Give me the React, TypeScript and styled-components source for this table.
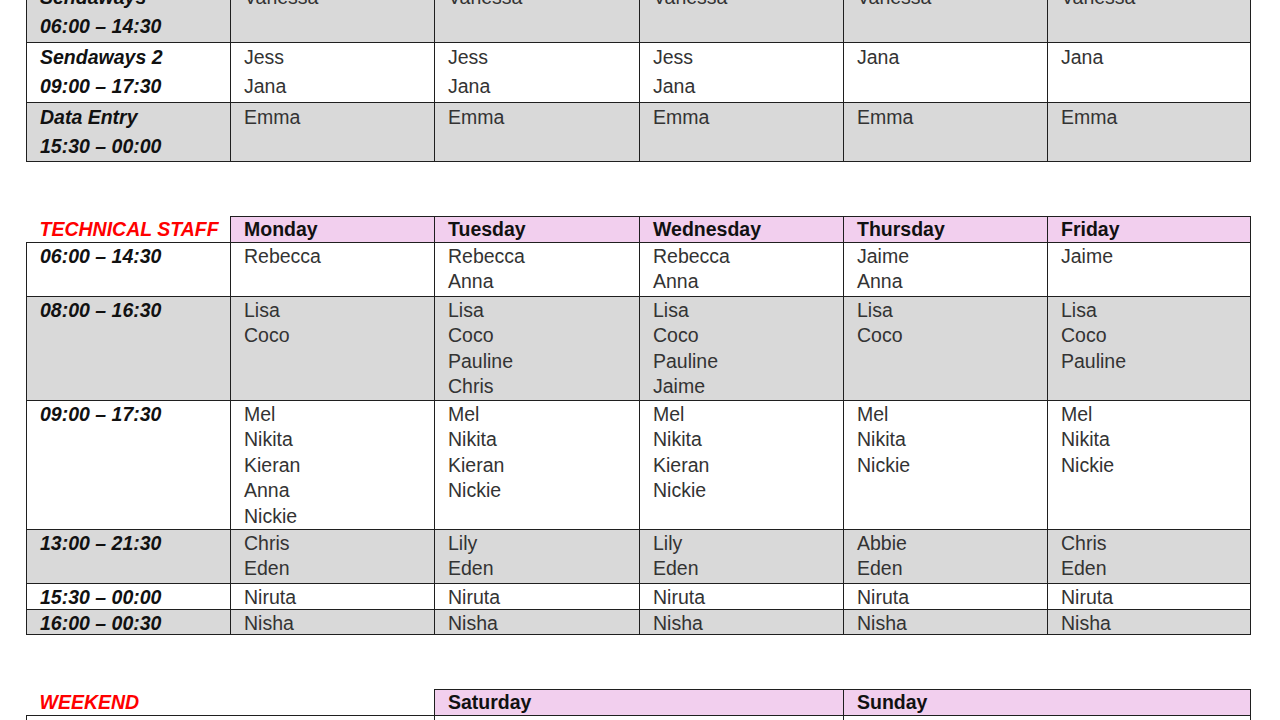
import React from "react";
import styled, { createGlobalStyle } from "styled-components";

const GlobalStyle = createGlobalStyle`
  html, body {
    margin: 0;
    padding: 0;
    background: #ffffff;
    overflow: hidden;
  }
  body {
    font-family: "Liberation Sans", Arial, sans-serif;
  }
`;

// the page is scrolled a little, so the first row is cut at the top
const Document = styled.div`
  margin-top: -18px;
  padding: 0 30px 0 26px;
  width: 1224px;
`;

const Section = styled.section`
  margin-bottom: 54px;
`;

const Table = styled.table`
  width: 1224px;
  border-collapse: collapse;
  table-layout: fixed;
  font-size: 19.5px;
`;

const Row = styled.tr<{ $shade?: boolean; $h: number }>`
  background: ${({ $shade }) => ($shade ? "#d9d9d9" : "#ffffff")};
  height: ${({ $h }) => $h}px;
`;

const Cell = styled.td<{ $lh: number; $pt: number }>`
  border: 1.5px solid #1f1f1f;
  padding: ${({ $pt }) => $pt}px 12px 0 13px;
  vertical-align: top;
  line-height: ${({ $lh }) => $lh}px;
  color: #333333;
  white-space: nowrap;
`;

const TimeCell = styled(Cell)`
  font-weight: bold;
  font-style: italic;
  color: #111111;
`;

const Line = styled.div``;

const HeadRow = styled.tr`
  height: 26px;
`;

const DayHead = styled.th`
  border: 1.5px solid #1f1f1f;
  background: #f2cfee;
  padding: 1px 12px 0 13px;
  text-align: left;
  font-weight: bold;
  color: #111111;
  line-height: 23.5px;
`;

const Label = styled.th`
  border: none;
  background: #ffffff;
  padding: 1px 12px 0 13px;
  text-align: left;
  font-weight: bold;
  font-style: italic;
  color: #ff0000;
  line-height: 23.5px;
  white-space: nowrap;
`;

type Shift = { time: string[]; days: string[][]; h: number; lh: number; pt: number };

const sendaways: Shift[] = [
  {
    time: ["Sendaways", "06:00 – 14:30"],
    days: [["Vanessa"], ["Vanessa"], ["Vanessa"], ["Vanessa"], ["Vanessa"]],
    h: 60,
    lh: 29,
    pt: 0,
  },
  {
    time: ["Sendaways 2", "09:00 – 17:30"],
    days: [["Jess", "Jana"], ["Jess", "Jana"], ["Jess", "Jana"], ["Jana"], ["Jana"]],
    h: 60,
    lh: 29,
    pt: 0,
  },
  {
    time: ["Data Entry", "15:30 – 00:00"],
    days: [["Emma"], ["Emma"], ["Emma"], ["Emma"], ["Emma"]],
    h: 59,
    lh: 29,
    pt: 0,
  },
];

const technical: Shift[] = [
  {
    time: ["06:00 – 14:30"],
    days: [["Rebecca"], ["Rebecca", "Anna"], ["Rebecca", "Anna"], ["Jaime", "Anna"], ["Jaime"]],
    h: 54,
    lh: 25.4,
    pt: 1,
  },
  {
    time: ["08:00 – 16:30"],
    days: [
      ["Lisa", "Coco"],
      ["Lisa", "Coco", "Pauline", "Chris"],
      ["Lisa", "Coco", "Pauline", "Jaime"],
      ["Lisa", "Coco"],
      ["Lisa", "Coco", "Pauline"],
    ],
    h: 104,
    lh: 25.4,
    pt: 1,
  },
  {
    time: ["09:00 – 17:30"],
    days: [
      ["Mel", "Nikita", "Kieran", "Anna", "Nickie"],
      ["Mel", "Nikita", "Kieran", "Nickie"],
      ["Mel", "Nikita", "Kieran", "Nickie"],
      ["Mel", "Nikita", "Nickie"],
      ["Mel", "Nikita", "Nickie"],
    ],
    h: 129,
    lh: 25.4,
    pt: 1,
  },
  {
    time: ["13:00 – 21:30"],
    days: [
      ["Chris", "Eden"],
      ["Lily", "Eden"],
      ["Lily", "Eden"],
      ["Abbie", "Eden"],
      ["Chris", "Eden"],
    ],
    h: 54,
    lh: 25.4,
    pt: 1,
  },
  {
    time: ["15:30 – 00:00"],
    days: [["Niruta"], ["Niruta"], ["Niruta"], ["Niruta"], ["Niruta"]],
    h: 26,
    lh: 22.5,
    pt: 2,
  },
  {
    time: ["16:00 – 00:30"],
    days: [["Nisha"], ["Nisha"], ["Nisha"], ["Nisha"], ["Nisha"]],
    h: 25,
    lh: 22,
    pt: 1.5,
  },
];

const weekdays = ["Monday", "Tuesday", "Wednesday", "Thursday", "Friday"];
const widths = [204, 204, 205, 204, 204, 203];

function Cols() {
  return (
    <colgroup>
      {widths.map((w, i) => (
        <col key={i} style={{ width: w }} />
      ))}
    </colgroup>
  );
}

function ShiftRows({ rows, shadeFirst }: { rows: Shift[]; shadeFirst?: boolean }) {
  return (
    <>
      {rows.map((r, i) => (
        <Row key={i} $h={r.h} $shade={shadeFirst ? i % 2 === 0 : i % 2 === 1}>
          <TimeCell $lh={r.lh} $pt={r.pt}>
            {r.time.map((t) => (
              <Line key={t}>{t}</Line>
            ))}
          </TimeCell>
          {r.days.map((names, j) => (
            <Cell key={j} $lh={r.lh} $pt={r.pt}>
              {names.map((n, k) => (
                <Line key={k}>{n}</Line>
              ))}
            </Cell>
          ))}
        </Row>
      ))}
    </>
  );
}

export default function App() {
  return (
    <>
      <GlobalStyle />
      <Document>
        <Section>
          <Table>
            <Cols />
            <tbody>
              <ShiftRows rows={sendaways} shadeFirst />
            </tbody>
          </Table>
        </Section>

        <Section>
          <Table>
            <Cols />
            <thead>
              <HeadRow>
                <Label>TECHNICAL STAFF</Label>
                {weekdays.map((d) => (
                  <DayHead key={d}>{d}</DayHead>
                ))}
              </HeadRow>
            </thead>
            <tbody>
              <ShiftRows rows={technical} />
            </tbody>
          </Table>
        </Section>

        <Section>
          <Table>
            <colgroup>
              <col style={{ width: 408 }} />
              <col style={{ width: 409 }} />
              <col style={{ width: 407 }} />
            </colgroup>
            <thead>
              <HeadRow>
                <Label>WEEKEND</Label>
                <DayHead>Saturday</DayHead>
                <DayHead>Sunday</DayHead>
              </HeadRow>
            </thead>
            <tbody>
              <Row $h={54}>
                <TimeCell $lh={25.4} $pt={1}>09:00 – 17:30</TimeCell>
                <Cell $lh={25.4} $pt={1}>Mel</Cell>
                <Cell $lh={25.4} $pt={1}>Nikita</Cell>
              </Row>
            </tbody>
          </Table>
        </Section>
      </Document>
    </>
  );
}
